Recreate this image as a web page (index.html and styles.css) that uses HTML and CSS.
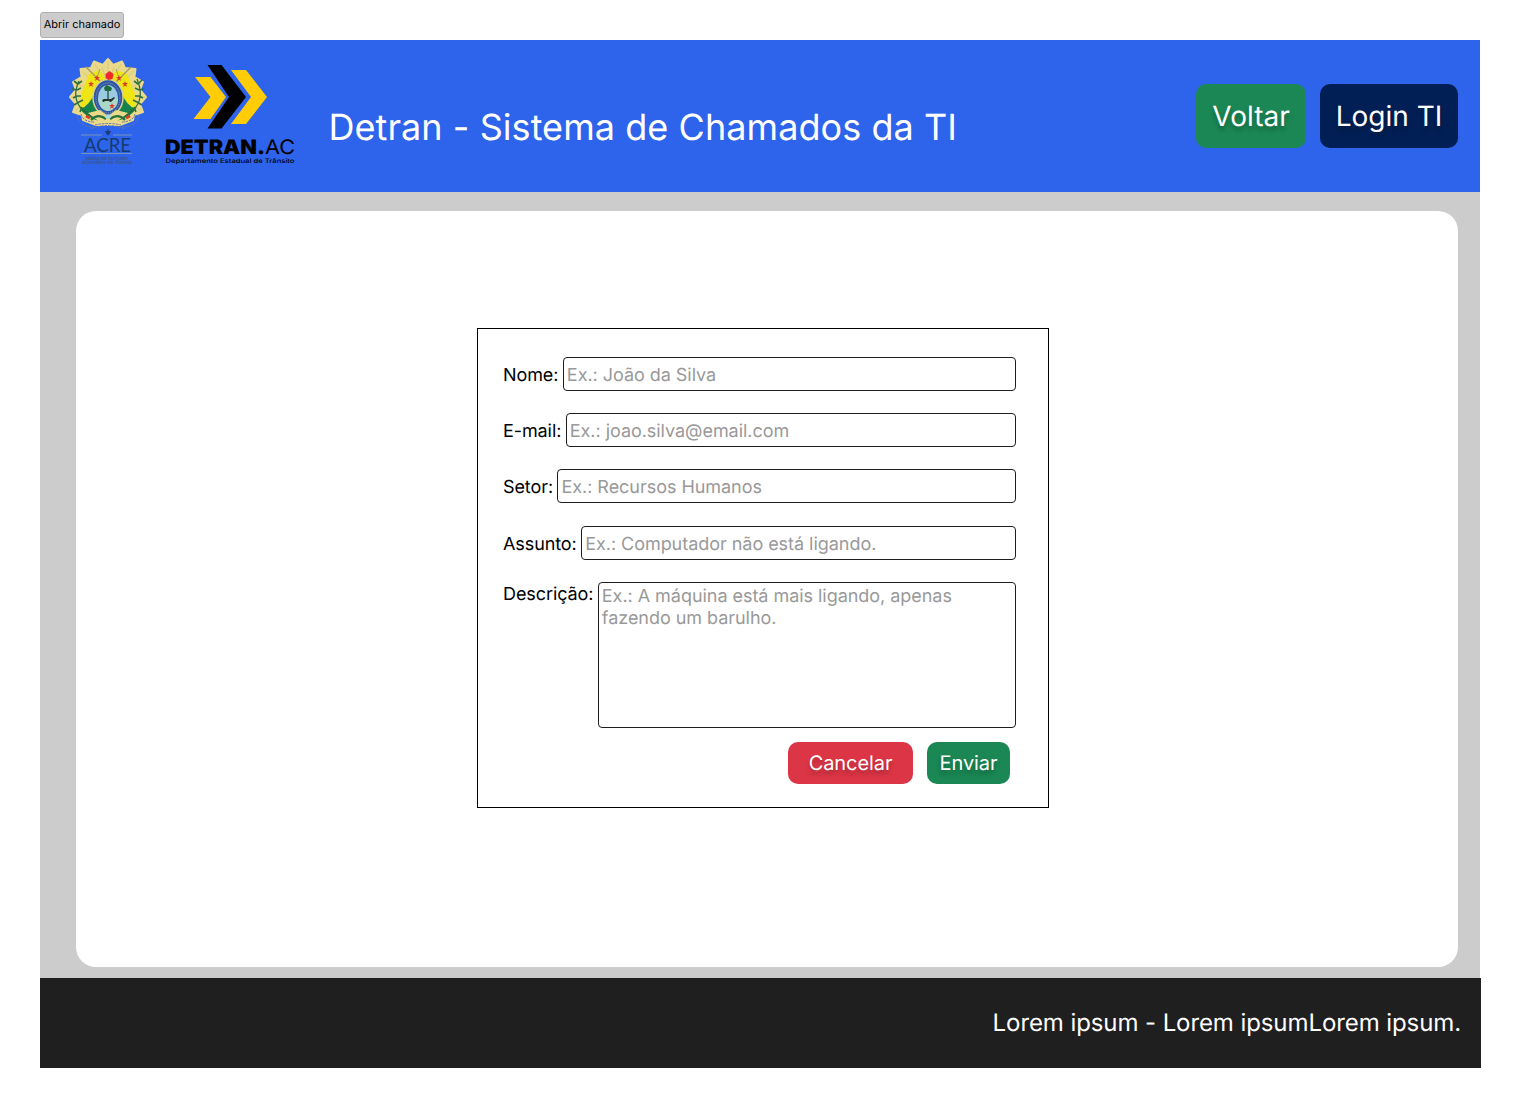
FILE: index.html
```html
<!DOCTYPE html>
<html lang="pt-BR">
<head>
<meta charset="utf-8">
<title>Abrir chamado</title>
<link rel="stylesheet" href="styles.css">
</head>
<body>
<div class="tag">Abrir chamado</div>
<div class="page">
  <header class="header">
    <svg class="crest" viewBox="60 50 100 120" width="100" height="120" role="img" aria-label="Governo do Acre">
      <path d="M108 59L113 65 122 61.500 125 68 135.500 69 134.500 77 143 82 140 90 146 97 140 104 143 112 134 115 133 120 120 125H96L83 120 82 115 73 112 76 104 70 97 76 90 73 82 81.500 77 80.500 69 91 68 94 61.500 103 65z" fill="#ead989" stroke="#ead989" stroke-width="2" stroke-linejoin="round"/>
      <path d="M108 61v12M102 67l3 9M114 67l-3 9M95 64l6 11M121 64l-6 11M82 71l7 7M134 71l-7 7M75 83l9 4M141 83l-9 4M71 97h9M145 97h-9M75 110l7-3M141 110l-7-3" stroke="#d0bf72" stroke-width=".7"/>
      <path d="M89 74l11-4 7 11-12 17-15 12 1-16z" fill="#efe414"/>
      <path d="M127 74l-11-4-7 11 12 17 15 12-1-16z" fill="#efe414"/>
      <path d="M80 109q10-3 15-18 13 6 26 0 5 15 15 18-9 12-28 13-19-1-28-13z" fill="#16834c"/>
      <path d="M86 67l17 17M131 67l-17 17" stroke="#a19a62" stroke-width="1.300"/>
      <path d="M100 69l-3 9M116 69l3 9" stroke="#a8a568" stroke-width="1"/>
      <path d="M79 81q-7 15 1 26 7 8 19 12M137 79q7 17-1 28-7 8-19 12" fill="none" stroke="#216b37" stroke-width="1.200"/>
      <path d="M78 84l-4-3m3 9l-5-1m5 7l-4 2m6 4l-5 3m8 2l-2 5m7-1l0 5M78 84l4-3m-5 9l4-2m-4 8l4 0m-2 6l4-2M138 84l4-4m-3 10l5-1m-5 7l4 2m-6 4l5 3m-8 2l2 5m-7-1l0 5M138 84l-4-3m5 9l-4-2m4 8l-4 0m2 6l-4-2" fill="none" stroke="#2e7140" stroke-width="1.600"/>
      <ellipse cx="108" cy="97.500" rx="15" ry="18" fill="#2e56a5" stroke="#d9d18c" stroke-width="1.500"/>
      <ellipse cx="108" cy="98" rx="12" ry="15" fill="none" stroke="#93a6a8" stroke-width="1" stroke-dasharray="1 1"/>
      <ellipse cx="108" cy="98" rx="10" ry="13" fill="#9acbe3"/>
      <path d="M98 99h20q0 10-10 12-9-2-10-12z" fill="#a9d8ca"/>
      <path d="M108 88v11" stroke="#284d31" stroke-width="1.300"/>
      <path d="M104 88l2-3 3 1 3 2-1 3-6 0z" fill="#1d6b3b"/>
      <path d="M102 100l2-1h7l3-2 1 1-3 3-1 1h-1l-1-1h-4l-1 1-1 0z" fill="#26352e"/>
      <path d="M105.500 78v-4l4-3 4 3-1 5-4 1z" fill="#f02a2a"/>
      <path id="star" d="M0-3l.8 2.100H3L1.200.4 2 3 0 1.500-2 3-1.200.4-3-.9H-.8z" fill="#d9382b" transform="translate(91 84)"/>
      <use href="#star" x="6" y="-6"/>
      <use href="#star" x="34" y="0"/>
      <use href="#star" x="28" y="-6"/>
      <use href="#star" x="21" y="22"/>
      <path d="M88 113l12-3 8 6 8-6 12 3-13 10q-7 2-14 0z" fill="#ead989"/>
      <path d="M91 120q7-7 15-1m19 1q-7-7-15-1" fill="none" stroke="#24713a" stroke-width="2.200"/>
      <ellipse cx="108" cy="116.500" rx="3" ry="2" fill="#a9dcdd"/>
      <path d="M86 116l4 2M130 116l-4 2" stroke="#d83d2a" stroke-width="3"/>
      <path d="M77 115q2 12 17 12M139 115q-2 12-17 12M81 114q2 8 14 8M135 114q-2 8-14 8M91 129q17-7 34 0M95 125q13-3 26 0" fill="none" stroke="#6179ad" stroke-width="1" stroke-dasharray="2.500 1"/>
      <path d="M107.500 129h1v2h2.500l-1.500 3-1.500 1.500-1.500-1.500-1.500-3h2.500z" fill="#1c3a6c"/>
      <path d="M81 135h21M113 135h19M81 153.500h51" stroke="#7595b8" stroke-width="1.200"/>
      <text x="84" y="151.500" class="acre" textLength="47" lengthAdjust="spacingAndGlyphs">ACRE</text>
      <text x="85" y="159.500" class="motto" textLength="43" lengthAdjust="spacingAndGlyphs">VISÃO DE FUTURO</text>
      <text x="82" y="164" class="motto" textLength="50" lengthAdjust="spacingAndGlyphs">GOVERNO DE TODOS</text>
    </svg>
    <svg class="detran" viewBox="160 55 140 115" width="140" height="115" role="img" aria-label="Detran Acre">
      <path d="M195 77h15.500l15.500 20-15.500 22H193.500l17-22z" fill="#ffcc05"/>
      <path d="M231 70h15l21 27-21 27h-15l20-27z" fill="#ffcc05"/>
      <path d="M207.500 65h14L246 97l-24.500 31.500h-14L229 97z" fill="#000"/>
      <text x="165" y="154" class="brand" textLength="100" lengthAdjust="spacingAndGlyphs">DETRAN.</text>
      <text x="265" y="154" class="brand-light" textLength="30" lengthAdjust="spacingAndGlyphs">AC</text>
      <text x="165.500" y="162.500" class="brand-sub" textLength="129" lengthAdjust="spacingAndGlyphs">Departamento Estadual de Trânsito</text>
    </svg>
    <h1 class="title">Detran - Sistema de Chamados da TI</h1>
    <nav class="nav">
      <button class="btn back">Voltar</button>
      <button class="btn login">Login TI</button>
    </nav>
  </header>
  <main class="main">
    <section class="panel">
      <form class="form">
        <label class="row"><span>Nome:</span><input class="field" placeholder="Ex.: João da Silva"></label>
        <label class="row"><span>E-mail:</span><input class="field" placeholder="Ex.: joao.silva@email.com"></label>
        <label class="row"><span>Setor:</span><input class="field" placeholder="Ex.: Recursos Humanos"></label>
        <label class="row subject"><span>Assunto:</span><input class="field" placeholder="Ex.: Computador não está ligando."></label>
        <label class="row description"><span>Descrição:</span><textarea class="field area" placeholder="Ex.: A máquina está mais ligando, apenas fazendo um barulho."></textarea></label>
        <div class="actions">
          <button type="button" class="btn cancel">Cancelar</button>
          <button type="button" class="btn send">Enviar</button>
        </div>
      </form>
    </section>
  </main>
  <footer class="footer">Lorem ipsum - Lorem ipsumLorem ipsum.</footer>
</div>
</body>
</html>
```
FILE: styles.css
```css
* { box-sizing: border-box; }
body { margin: 0; padding: 12px 40px 0; background: #fff; font-family: Inter, sans-serif; color: #000; text-rendering: geometricPrecision; }
.tag { width: 84px; height: 26px; margin-bottom: 2px; border: 1px solid #b0b0b0; border-radius: 3px; background: #ccc; font-size: 11px; line-height: 23px; text-align: center; white-space: nowrap; }
.page { width: 1441px; }
.header { display: flex; width: 1440px; height: 152px; padding: 10px 22px 0 20px; background: #2e63eb; }
.crest { flex: none; }
.detran { flex: none; margin-top: 5px; }
.acre { font: 19.5px Lato, sans-serif; fill: #143c72; }
.motto { font: bold 4.5px Lato, sans-serif; fill: #3a5482; }
.brand { font: 900 20px Inter, sans-serif; }
.brand-light { font: 20px Inter, sans-serif; }
.brand-sub { font: 500 6.2px Inter, sans-serif; }
.title { margin: 55px 0 0 28.5px; color: #fff; font-size: 36px; font-weight: 400; line-height: 44px; letter-spacing: .06px; white-space: nowrap; }
.nav { display: flex; gap: 14px; margin: 34px 0 0 auto; }
.btn { padding: 0; border: 0; border-radius: 10px; color: #fff; font-family: inherit; font-weight: 400; text-rendering: inherit; text-shadow: 0 4px 4px rgba(0, 0, 0, .25); white-space: nowrap; }
.back, .login { height: 64px; font-size: 28px; }
.back { width: 110px; background: #1a8754; }
.login { width: 138px; background: #021f55; }
.main { width: 1440px; height: 786px; padding: 19px 22px 11px 36px; background: #ccc; }
.panel { height: 756px; padding: 117px 0 0 401px; border-radius: 20px; background: #fff; }
.form { width: 572px; height: 480px; padding: 28px 32px 0 25px; border: 1px solid #000; }
.row { display: flex; gap: 4.5px; height: 34px; margin-bottom: 22px; font-size: 18px; line-height: 37px; letter-spacing: -.09px; white-space: nowrap; }
.field { flex: 1; min-width: 0; padding: 3px 3px 0; border: 1px solid #1e1e1e; border-radius: 4px; outline: 0; background: #fff; font: 400 18px/22px Inter, sans-serif; letter-spacing: -.04px; text-rendering: inherit; }
.field::placeholder { color: #999; opacity: 1; }
.subject { margin-top: 23px; }
.description { height: 146px; margin-bottom: 14px; line-height: 25px; }
.area { padding-top: 3px; resize: none; }
.actions { display: flex; justify-content: flex-end; gap: 14px; padding-right: 6px; }
.cancel, .send { height: 42px; font-size: 20px; letter-spacing: -.08px; }
.cancel { width: 125px; background: #dc3546; }
.send { width: 83px; background: #1a8754; }
.footer { height: 90px; padding-right: 20px; background: #1f1f1f; color: #fff; font-size: 24px; line-height: 90px; letter-spacing: -.09px; text-align: right; }
```
